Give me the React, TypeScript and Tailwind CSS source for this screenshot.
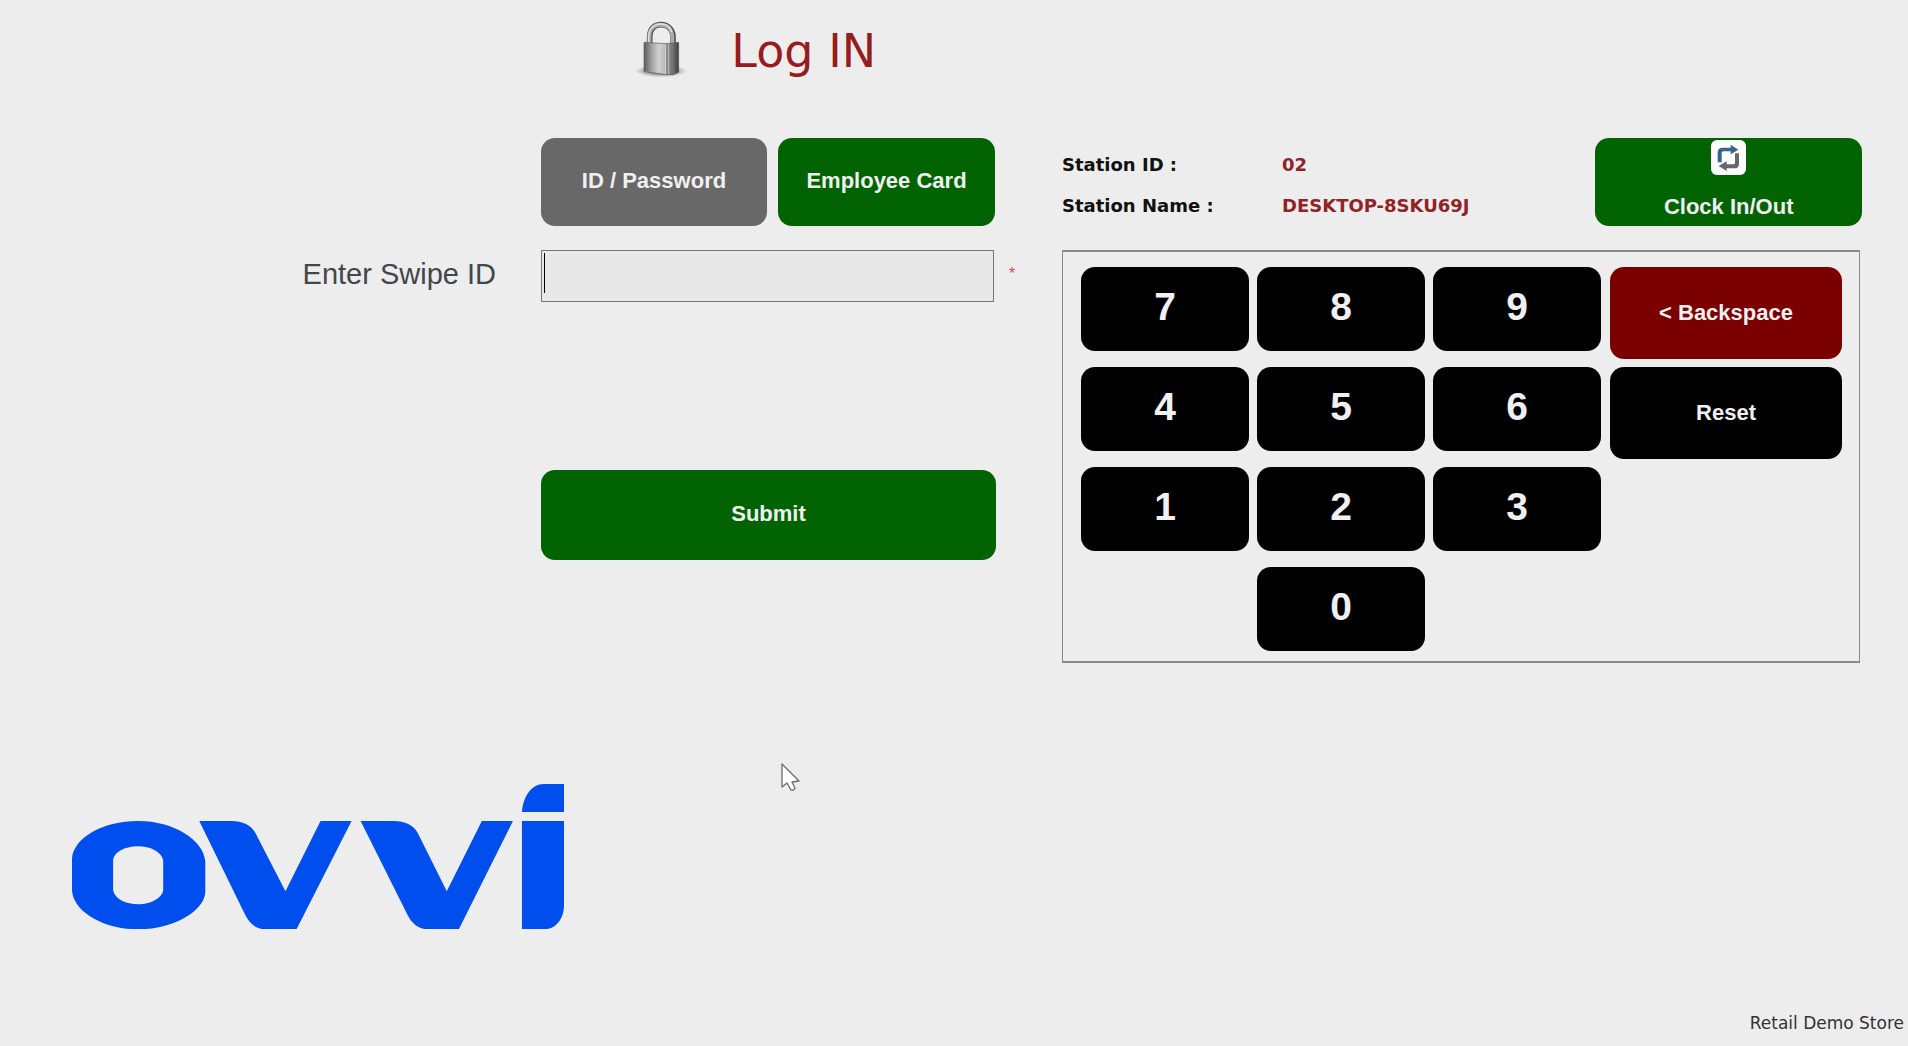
import React from "react";

const noop = () => {};

type ButtonProps = {
  children: React.ReactNode;
  className?: string;
  onClick?: () => void;
};

const Button = ({ children, className = "", onClick = noop }: ButtonProps) => {
  return (
    <button
      type="button"
      onClick={onClick}
      className={`flex items-center rounded-[14px] font-bold text-[#f0f0f0] ${className}`}
    >
      {children}
    </button>
  );
};

const LockIcon = () => (
  <svg width="52" height="58" viewBox="0 0 156 174" aria-hidden="true">
    <defs>
      <linearGradient id="lockFront" x1="0" x2="1" y1="0" y2="0">
        <stop offset="0" stopColor="#5c5c5c" />
        <stop offset="0.3" stopColor="#9a9a9a" />
        <stop offset="0.65" stopColor="#d2d2d2" />
        <stop offset="1" stopColor="#b4b4b4" />
      </linearGradient>
      <linearGradient id="lockSide" x1="0" x2="1" y1="0" y2="0">
        <stop offset="0" stopColor="#8a8a8a" />
        <stop offset="0.5" stopColor="#777777" />
        <stop offset="1" stopColor="#3c3c3c" />
      </linearGradient>
      <radialGradient id="lockShadow">
        <stop offset="0.4" stopColor="#8a8a8a" />
        <stop offset="1" stopColor="#8a8a8a" stopOpacity="0" />
      </radialGradient>
    </defs>
    <ellipse cx="78" cy="150" rx="78" ry="19" fill="url(#lockShadow)" />
    <path d="M44 72V48C44 22 60 11 78 11s36 12 36 38v24" fill="none" stroke="#4a4a4a" strokeWidth="17" />
    <path d="M43 72V48C43 22 59 11 77 11s35 12 35 38v24" fill="none" stroke="#a9a9a9" strokeWidth="12" />
    <path d="M41 68V48C41 26 54 10 76 9s30 10 34 24" fill="none" stroke="#e2e2e2" strokeWidth="4" />
    <path d="M27 64l68 4v92l-68-9z" fill="url(#lockFront)" />
    <path d="M93 68l38-4v90l-16 7-22 1z" fill="url(#lockSide)" />
    <path d="M92 68v93M101 68v93" stroke="#e0e0e0" strokeWidth="2" />
    <path d="M27 64l68 4 36-4v90l-16 7H90l-63-9z" fill="none" stroke="#5b5b5b" strokeWidth="2" />
  </svg>
);

const SwapIcon = () => (
  <svg width="35" height="35" viewBox="0 0 105 105" aria-hidden="true">
    <rect width="105" height="105" rx="18" fill="#fcfdfc" />
    <path d="M20 67V38q0-15 15-15h24V14l23 15-23 14v-9H37q-5 0-5 5v28z" fill="#35648f" />
    <path d="M84 40v31q0 14-14 14H47v8L23 78l24-14v9h20q5 0 5-5V40z" fill="#66676b" />
  </svg>
);

const OvviLogo = () => (
  <svg
    className="w-[26.8%]"
    viewBox="0 0 491 145"
    fill="#004eee"
    role="img"
    aria-label="ovvi"
  >
    <path
      fillRule="evenodd"
      d="M0 74C2 54 30 37 66 37s65 19 67 40v31c-1 19-32 37-67 37S1 127 0 106zM41 76v30c2 9 13 14 25 14s24-6 25-14V76c-2-9-13-14-25-14s-24 5-25 14z"
    />
    <path d="M127 37h32c11 0 20 4 24 12l30 58 35-70h31l-55 108h-31c-9 0-16-6-20-14z" />
    <path d="M288 37h33c11 0 20 4 24 12l29 58 35-70h31l-54 108h-31c-9 0-16-6-20-14z" />
    <path d="M449 28C450 13 458 0 471 0h20v28z" />
    <path d="M449 37h42v84c0 12-7 24-20 24h-22z" />
  </svg>
);

const MouseCursor = () => (
  <svg
    className="absolute left-[781px] top-[763px]"
    width="20"
    height="30"
    viewBox="0 0 20 30"
    aria-hidden="true"
  >
    <path
      d="M1 1v23l5-4 4 7q3 1 4-2l-3-6 7-1z"
      fill="#ffffff"
      stroke="#6b6b6b"
      strokeWidth="1.3"
      strokeLinejoin="round"
    />
  </svg>
);

const Keypad = () => {
  const digits = ["7", "8", "9", "4", "5", "6", "1", "2", "3", "0"];
  return (
    <div className="mr-[2px] grid grid-cols-[520fr_232fr] gap-x-[9px] border-x border-y-2 border-[#8a8a8a] pt-[15px] pr-[17px] pb-[10px] pl-[18px]">
      <div className="grid grid-cols-3 gap-x-2 gap-y-4">
        {digits.map((digit) => (
          <Button
            key={digit}
            className={`h-[84px] justify-center bg-black pb-1 text-[39px] ${digit === "0" ? "col-start-2" : ""}`}
          >
            {digit}
          </Button>
        ))}
      </div>
      <div className="flex flex-col gap-2">
        <Button className="h-[92px] justify-center bg-[#7b0000] pb-[2px]">&lt; Backspace</Button>
        <Button className="h-[92px] justify-center bg-black pb-[2px]">Reset</Button>
      </div>
    </div>
  );
};

const App = () => {
  return (
    <div className="relative flex min-h-screen flex-col bg-[#ededed] font-['Liberation_Sans',Arial,sans-serif] text-[22px]">
      <header className="flex items-start pt-[21px] pl-[33.3%]">
        <LockIcon />
        <h1 className="ml-11 font-['DejaVu_Sans',Verdana,sans-serif] text-[46px] leading-[60px] text-[#961c20]">
          Log IN
        </h1>
      </header>

      <main className="mt-[57px] grid grid-cols-[541fr_455fr_66fr_800fr_46fr] gap-y-6">
        <div className="col-start-2 mr-px flex gap-[11px]">
          <Button className="h-[88px] flex-[226] justify-center bg-[#686868] pb-1">ID / Password</Button>
          <Button className="h-[88px] flex-[217] justify-center bg-[#026302] pb-1">Employee Card</Button>
        </div>

        <div className="col-start-4 flex justify-between">
          <dl className="grid grid-cols-[220px_auto] content-start pt-[6px] font-['DejaVu_Sans',Verdana,sans-serif] text-[18px] leading-[41px] font-bold">
            <dt className="text-[#111111]">Station ID :</dt>
            <dd className="text-[#8f2327]">02</dd>
            <dt className="text-[#111111]">Station Name :</dt>
            <dd className="text-[#8f2327]">DESKTOP-8SKU69J</dd>
          </dl>
          <Button className="h-[88px] w-1/3 flex-col gap-[18px] bg-[#026302] pt-[2px]">
            <SwapIcon />
            <span className="leading-7">Clock In/Out</span>
          </Button>
        </div>

        <label
          htmlFor="swipe-id"
          className="col-start-1 pr-[45px] text-right text-[29px] leading-[48px] text-[#444749]"
        >
          Enter Swipe ID
        </label>
        <form className="flex flex-col" onSubmit={(e) => e.preventDefault()}>
          <div className="relative mr-[2px]">
            <input
              id="swipe-id"
              type="text"
              className="block h-[52px] w-full border border-[#777777] bg-[#e8e8e8] px-1 caret-transparent outline-none"
            />
            <span className="absolute top-[3px] left-[3px] h-10 w-px bg-black" />
          </div>
          <Button className="mt-[168px] h-[90px] justify-center bg-[#026302] pb-1">Submit</Button>
        </form>
        <span className="pl-[13px] text-[16px] leading-[48px] text-[#e0484c]">*</span>
        <Keypad />
      </main>

      <div className="mt-[121px] pl-[72px]">
        <OvviLogo />
      </div>

      <footer className="mt-auto pr-1 pb-[11px] text-right font-['DejaVu_Sans',Verdana,sans-serif] text-[17px] leading-6 text-[#333333]">
        Retail Demo Store
      </footer>

      <MouseCursor />
    </div>
  );
};

export default App;
